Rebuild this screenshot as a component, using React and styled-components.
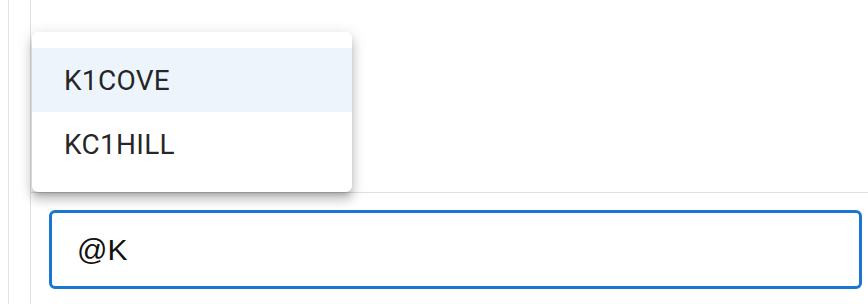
import React from 'react'
import styled, { createGlobalStyle } from 'styled-components'

const GlobalStyle = createGlobalStyle`
  html, body {
    margin: 0;
    padding: 0;
    background: #ffffff;
  }
  * {
    box-sizing: border-box;
  }
`

const users = ['K1COVE', 'KC1HILL']

export default function App() {
  return (
    <>
      <GlobalStyle />
      <Page>
        <Gutter />
        <Main>
          <Messages />
          <Composer>
            <Input defaultValue="@K" />
          </Composer>
          <Menu>
            {users.map((u, i) => (
              <MenuItem key={u} $active={i === 0}>{u}</MenuItem>
            ))}
          </Menu>
        </Main>
      </Page>
    </>
  )
}

const Page = styled.div`
  display: flex;
  height: 304px;
  overflow: hidden;
`
const Gutter = styled.div`
  margin-left: 8px;
  width: 23px;
  flex-shrink: 0;
  border-left: 1px solid #e4e4e4;
  border-right: 1px solid #e0e0e0;
`
const Main = styled.div`
  flex: 1;
  display: flex;
  flex-direction: column;
  position: relative;
`
const Messages = styled.div`
  height: 193px;
  border-bottom: 1px solid #e0e0e0;
`
const Composer = styled.div`
  padding: 17px 6px 0 18px;
`
const Input = styled.input`
  display: block;
  width: 100%;
  height: 79px;
  border: 3px solid #1976d2;
  border-radius: 6px;
  padding: 0 0 0 25px;
  font-family: "Liberation Sans", Arial, sans-serif;
  font-size: 30px;
  color: #111;
  background: #fff;
  outline: none;
`
const Menu = styled.div`
  position: absolute;
  left: 1px;
  top: 32px;
  width: 320px;
  padding: 16px 0;
  background: #fff;
  border-radius: 6px;
  box-shadow: 0px 5px 5px -3px rgba(0, 0, 0, 0.2),
    0px 8px 10px 1px rgba(0, 0, 0, 0.14),
    0px 3px 14px 2px rgba(0, 0, 0, 0.12);
`
const MenuItem = styled.div`
  height: 64px;
  display: flex;
  align-items: center;
  padding: 0 32px;
  font-family: Roboto, "Liberation Sans", sans-serif;
  font-size: 28px;
  letter-spacing: 0.3px;
  color: rgba(0, 0, 0, 0.87);
  background: ${p => (p.$active ? '#edf4fb' : 'transparent')};
`
